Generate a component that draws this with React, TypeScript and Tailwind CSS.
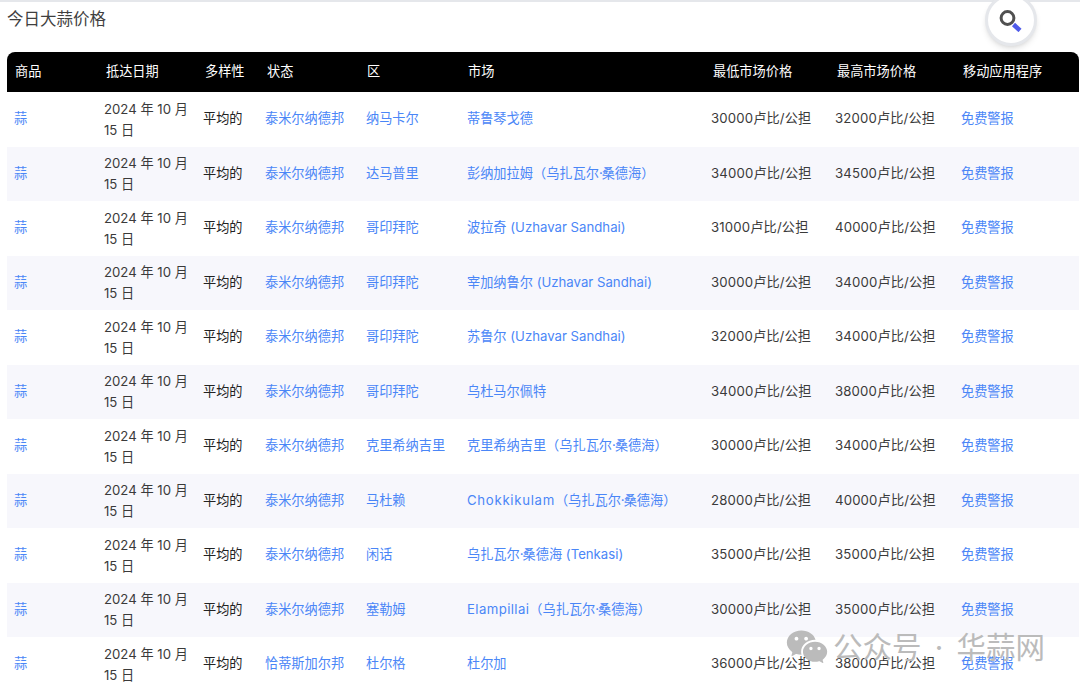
import React from 'react';
import { RiWechatFill } from 'react-icons/ri';

const Uz = () => (
  <>
    乌扎瓦尔<span className="tracking-[-1px]">·</span>桑德海
  </>
);
const Lat = ({ children, t = 'tracking-normal' }: { children: React.ReactNode; t?: string }) => (
  <span className={t}>{children}</span>
);

const rows: [string, string, React.ReactNode, string, string][] = [
  ['泰米尔纳德邦', '纳马卡尔', '蒂鲁琴戈德', '30000', '32000'],
  ['泰米尔纳德邦', '达马普里', <>彭纳加拉姆（<Uz />）</>, '34000', '34500'],
  ['泰米尔纳德邦', '哥印拜陀', <>波拉奇 <Lat>(Uzhavar Sandhai)</Lat></>, '31000', '40000'],
  ['泰米尔纳德邦', '哥印拜陀', <>宰加纳鲁尔 <Lat>(Uzhavar Sandhai)</Lat></>, '30000', '34000'],
  ['泰米尔纳德邦', '哥印拜陀', <>苏鲁尔 <Lat>(Uzhavar Sandhai)</Lat></>, '32000', '34000'],
  ['泰米尔纳德邦', '哥印拜陀', '乌杜马尔佩特', '34000', '38000'],
  ['泰米尔纳德邦', '克里希纳吉里', <>克里希纳吉里（<Uz />）</>, '30000', '34000'],
  ['泰米尔纳德邦', '马杜赖', <><Lat t="tracking-[0.7px]">Chokkikulam</Lat>（<Uz />）</>, '28000', '40000'],
  ['泰米尔纳德邦', '闲话', <><Uz /> <Lat>(Tenkasi)</Lat></>, '35000', '35000'],
  ['泰米尔纳德邦', '塞勒姆', <><Lat t="tracking-[0.4px]">Elampillai</Lat>（<Uz />）</>, '30000', '35000'],
  ['恰蒂斯加尔邦', '杜尔格', '杜尔加', '36000', '38000'],
];

const headers = [
  ['商品', 'w-[91px]'],
  ['抵达日期', 'w-[99px]'],
  ['多样性', 'w-[62px]'],
  ['状态', 'w-[100px]'],
  ['区', 'w-[101px]'],
  ['市场', 'w-[245px]'],
  ['最低市场价格', 'w-[124px]'],
  ['最高市场价格', 'w-[126px]'],
  ['移动应用程序', 'w-[124px]'],
];

const link = 'text-[#4a86f7]';

export default function App() {
  return (
    <div className="relative h-[689px] w-[1080px] overflow-hidden bg-white font-['Inter','Noto_Sans_CJK_SC',sans-serif] text-[13.2px] text-[#3a3a3a]">
      <div className="h-[2px] bg-gray-200" />
      <h1 className="h-[50px] pl-[7px] pt-[7px] text-[16.5px] leading-5 font-normal text-[#3f3f3f]">今日大蒜价格</h1>

      {/* floating search button */}
      <div className="absolute left-[985px] top-[-6px] flex h-[52px] w-[52px] items-center justify-center rounded-full border-[3px] border-gray-200 bg-white shadow-md">
        <svg width="24" height="24" viewBox="0 0 24 24" fill="none">
          <circle cx="8.5" cy="10" r="6.4" stroke="#505050" strokeWidth="3" />
          <path d="M14.5 16.5l6.5 6" stroke="#4f5bea" strokeWidth="4.5" />
        </svg>
      </div>

      <table className="ml-[7px] w-[1072px] table-fixed border-collapse">
        <thead>
          <tr className="h-[40px] bg-black text-white">
            {headers.map(([label, w], i) => (
              <th
                key={label}
                className={`${w} pl-2 text-left font-normal ${i === 0 ? 'rounded-tl-lg' : ''} ${i === 8 ? 'rounded-tr-lg' : ''}`}
              >
                {label}
              </th>
            ))}
          </tr>
        </thead>
        <tbody>
          {rows.map((r, i) => (
            <tr key={i} className={`h-[54.5px] ${i % 2 ? 'bg-[#f7f7fc]' : 'bg-white'}`}>
              <td className={`pl-[7px] ${link}`}>蒜</td>
              <td className="pl-[6px] pt-px leading-[21px]">2024 年 10 月 15 日</td>
              <td className="pl-[6px] text-[#222]">平均的</td>
              <td className={`pl-[6px] ${link}`}>{r[0]}</td>
              <td className={`pl-[7px] ${link}`}>{r[1]}</td>
              <td className={`pl-[7px] ${link}`}>{r[2]}</td>
              <td className="pl-[6px] tracking-[0.15px]">{r[3]}卢比/公担</td>
              <td className="pl-[6px] tracking-[0.15px]">{r[4]}卢比/公担</td>
              <td className={`pl-[6px] ${link}`}>免费警报</td>
            </tr>
          ))}
        </tbody>
      </table>

      {/* watermark */}
      <div className="absolute left-[785px] top-[625px] flex items-center gap-[4px] text-[#bbbbbb]">
        <RiWechatFill size={44} />
        <span className="flex text-[29.5px] leading-9">
          <span>公众号</span>
          <span className="w-[35px] text-center">·</span>
          <span>华蒜网</span>
        </span>
      </div>
    </div>
  );
}
